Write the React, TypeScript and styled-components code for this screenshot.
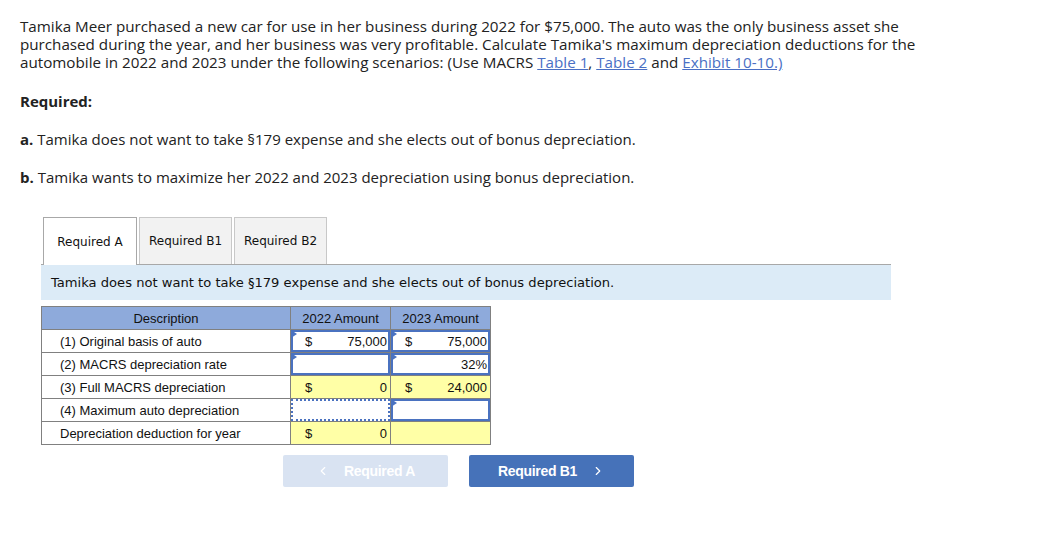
import { FC } from 'react';
import styled, { createGlobalStyle, css } from 'styled-components';
import { ChevronLeft, ChevronRight } from 'lucide-react';

const GlobalStyle = createGlobalStyle`
  body {
    margin: 0;
    background: #fff;
    font-family: "Open Sans", sans-serif;
  }
`;

const Page = styled.div`
  padding: 17px 20px 0 20px;
  width: 1048px;
  box-sizing: border-box;
`;

const Intro = styled.p`
  margin: 0;
  width: 900px;
  font-size: 15.2px;
  line-height: 18px;
  color: #222;
  white-space: nowrap;
`;

const Link = styled.a`
  color: #4a6fc4;
  text-decoration: underline;
`;

const Heading = styled.p`
  margin: 21px 0 0;
  font-size: 15px;
  line-height: 18px;
  font-weight: 700;
  color: #222;
`;

const Part = styled.p`
  margin: 20px 0 0;
  font-size: 15px;
  line-height: 18px;
  color: #222;

  b {
    font-weight: 700;
  }
`;

const Work = styled.div`
  margin: 30px 0 0 21px;
  width: 850px;
`;

const TabBar = styled.div`
  display: flex;
  align-items: flex-end;
  gap: 2px;
  padding-left: 2px;
  height: 48px;
`;

const Tab = styled.div<{ $active?: boolean }>`
  display: flex;
  align-items: center;
  justify-content: center;
  box-sizing: border-box;
  font-family: "DejaVu Sans", Verdana, sans-serif;
  font-size: 12px;
  color: #111;
  white-space: nowrap;
  ${({ $active }) =>
    $active
      ? css`
          height: 48px;
          width: 94px;
          background: #fff;
          border: 1px solid #a8a8a8;
          border-bottom: none;
          margin-bottom: -1px;
          position: relative;
          z-index: 1;
        `
      : css`
          height: 47px;
          width: 93px;
          background: #f2f2f2;
          border: 1px solid #c8c8c8;
          border-bottom: none;
        `}
`;

const Banner = styled.div`
  height: 36px;
  box-sizing: border-box;
  border-top: 1px solid #a8a8a8;
  background: #dcebf7;
  display: flex;
  align-items: center;
  padding-left: 10px;
  font-family: "DejaVu Sans", Verdana, sans-serif;
  font-size: 13.1px;
  color: #111;
  white-space: nowrap;
`;

const Grid = styled.table`
  margin-top: 6px;
  border-collapse: collapse;
  font-family: "Liberation Sans", Arial, sans-serif;
  font-size: 13px;
  color: #111;
`;

const Head = styled.th`
  background: #8eaadb;
  font-weight: 400;
  height: 22px;
  padding: 0;
  border: 1px solid #808080;
  text-align: center;
`;

const Label = styled.td`
  width: 230px;
  height: 22px;
  padding: 0 0 0 18px;
  border: 1px solid #808080;
  white-space: nowrap;
`;

type Kind = 'input' | 'calc' | 'focus' | 'plain';

const Cell = styled.td<{ $kind: Kind }>`
  width: 100px;
  height: 22px;
  padding: 0;
  box-sizing: border-box;
  border: 1px solid #808080;
  background: ${({ $kind }) => ($kind === 'calc' ? '#ffffa6' : '#fff')};
  position: relative;
`;

const Box = styled.div<{ $kind: Kind }>`
  position: absolute;
  inset: 0;
  display: flex;
  align-items: center;
  justify-content: space-between;
  padding: 0 3px 0 14px;
  ${({ $kind }) =>
    $kind === 'input' &&
    css`
      border: 2px solid #4a72c0;
      padding: 0 1px 0 12px;
    `}
  ${({ $kind }) =>
    $kind === 'focus' &&
    css`
      border: 2px dotted #4a72c0;
      padding: 0 1px 0 12px;
    `}
`;

const Flag = styled.span`
  position: absolute;
  left: 0;
  top: 0;
  width: 0;
  height: 0;
  border-top: 4px solid transparent;
  border-bottom: 4px solid transparent;
  border-left: 6px solid #4a72c0;
`;

const Buttons = styled.div`
  display: flex;
  gap: 21px;
  margin: 10px 0 0 242px;
`;

const NavButton = styled.button<{ $disabled?: boolean }>`
  width: 165px;
  height: 32px;
  border: none;
  border-radius: 2px;
  font-family: "Liberation Sans", Arial, sans-serif;
  font-size: 14px;
  font-weight: 700;
  letter-spacing: -0.3px;
  color: #fff;
  display: flex;
  align-items: center;
  justify-content: center;
  gap: 14px;
  background: ${({ $disabled }) => ($disabled ? '#d9e3f2' : '#4672b9')};
  cursor: ${({ $disabled }) => ($disabled ? 'default' : 'pointer')};
`;

interface ICell {
  kind: Kind;
  dollar?: boolean;
  value?: string;
  flag?: boolean;
}

interface IRow {
  label: string;
  c2022: ICell;
  c2023: ICell;
}

const rows: IRow[] = [
  {
    label: '(1) Original basis of auto',
    c2022: { kind: 'input', dollar: true, value: '75,000', flag: true },
    c2023: { kind: 'input', dollar: true, value: '75,000', flag: true },
  },
  {
    label: '(2) MACRS depreciation rate',
    c2022: { kind: 'input', flag: true },
    c2023: { kind: 'input', value: '32%', flag: true },
  },
  {
    label: '(3) Full MACRS depreciation',
    c2022: { kind: 'calc', dollar: true, value: '0' },
    c2023: { kind: 'calc', dollar: true, value: '24,000' },
  },
  {
    label: '(4) Maximum auto depreciation',
    c2022: { kind: 'focus' },
    c2023: { kind: 'input', flag: true },
  },
  {
    label: 'Depreciation deduction for year',
    c2022: { kind: 'calc', dollar: true, value: '0' },
    c2023: { kind: 'calc' },
  },
];

const AmountCell: FC<{ data: ICell }> = ({ data }) => (
  <Cell $kind={data.kind}>
    <Box $kind={data.kind}>
      <span>{data.dollar ? '$' : ''}</span>
      <span>{data.value ?? ''}</span>
    </Box>
    {data.flag && <Flag />}
  </Cell>
);

export default function App() {
  return (
    <>
      <GlobalStyle />
      <Page>
        <Intro>
          Tamika Meer purchased a new car for use in her business during 2022 for $75,000. The auto was the only
          business asset she
          <br />
          purchased during the year, and her business was very profitable. Calculate Tamika's maximum depreciation
          deductions for the
          <br />
          automobile in 2022 and 2023 under the following scenarios: (Use MACRS <Link>Table 1</Link>,{' '}
          <Link>Table 2</Link> and <Link>Exhibit 10-10.)</Link>
        </Intro>
        <Heading>Required:</Heading>
        <Part>
          <b>a.</b> Tamika does not want to take §179 expense and she elects out of bonus depreciation.
        </Part>
        <Part>
          <b>b.</b> Tamika wants to maximize her 2022 and 2023 depreciation using bonus depreciation.
        </Part>

        <Work>
          <TabBar>
            <Tab $active>Required A</Tab>
            <Tab>Required B1</Tab>
            <Tab>Required B2</Tab>
          </TabBar>
          <Banner>Tamika does not want to take §179 expense and she elects out of bonus depreciation.</Banner>

          <Grid>
            <thead>
              <tr>
                <Head>Description</Head>
                <Head>2022 Amount</Head>
                <Head>2023 Amount</Head>
              </tr>
            </thead>
            <tbody>
              {rows.map((row) => (
                <tr key={row.label}>
                  <Label>{row.label}</Label>
                  <AmountCell data={row.c2022} />
                  <AmountCell data={row.c2023} />
                </tr>
              ))}
            </tbody>
          </Grid>

          <Buttons>
            <NavButton $disabled>
              <ChevronLeft size={14} strokeWidth={2} />
              Required A
            </NavButton>
            <NavButton>
              Required B1
              <ChevronRight size={14} strokeWidth={2} />
            </NavButton>
          </Buttons>
        </Work>
      </Page>
    </>
  );
}
